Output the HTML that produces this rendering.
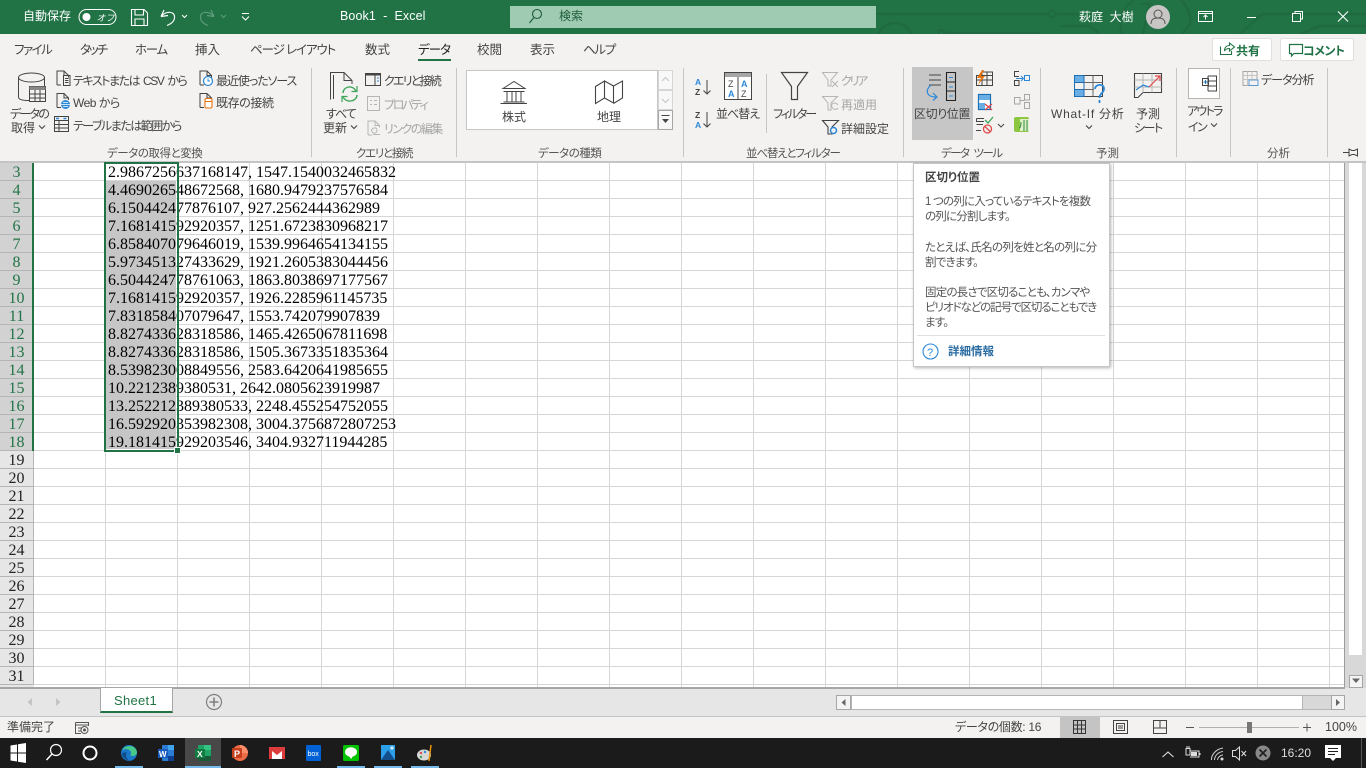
<!DOCTYPE html>
<html lang="ja"><head><meta charset="utf-8"><title>Book1 - Excel</title>
<style>
html,body{margin:0;padding:0;width:1366px;height:768px;overflow:hidden;background:#fff}
div{position:absolute;box-sizing:border-box}
.t{position:absolute;white-space:nowrap;font:12px/16px "Liberation Sans","Noto Sans CJK JP",sans-serif;font-feature-settings:"palt";color:#444}
.tab{font-size:12.5px;top:41px;color:#444}
.g{font-size:11.5px;top:145px;color:#555}
.d{color:#a6a6a6}
.w{color:#fff}
.tip{font-size:11.5px;color:#555;left:925px;letter-spacing:-.8px}
#rows{left:108px;top:164px;font:16px/18px "Liberation Serif",serif;color:#000;white-space:nowrap}
#rows p{margin:0;height:18px;position:relative;left:0}
#nums{left:0;top:163px;width:33px;font:16px/18px "Liberation Serif",serif;text-align:center;color:#217346}
#nums p{margin:0;height:18px;box-sizing:border-box;background:#d2d2d2;border-bottom:1px solid #b5b5b5;line-height:19px}
#nums p.u{background:#e6e6e6;color:#222}
svg{position:absolute;left:0;top:0}
</style></head><body>
<div style="left:0;top:0;width:1366px;height:34px;background:#217346;overflow:hidden">
<svg width="1366" height="34" viewBox="0 0 1366 34" fill="none">
<g stroke="#1f6a40" stroke-width="2.500">
<path d="M876 14H1048M1057 14H1080"/><circle cx="1052" cy="14" r="3.500" stroke-width="2"/>
<circle cx="895" cy="41" r="18"/><circle cx="941" cy="33" r="3" stroke-width="2"/>
<path d="M945 33H1040"/><path d="M1100 34L1090 26H1060"/>
<path d="M1122 34C1118 20 1122 8 1134 0M1140 4H1150L1143 34"/><path d="M1176 -4A30 30 0 0 1 1190 24L1182 34"/>
<path d="M1240 34L1262 14H1366"/><path d="M1300 34L1320 26H1366"/>
</g></svg>
</div>
<div style="left:0;top:34px;width:1366px;height:128px;background:#f3f2f1"></div>
<div style="left:510px;top:6px;width:366px;height:22px;background:#a0cbb3"></div>
<div style="left:912px;top:67px;width:61px;height:73px;background:#c6c6c6"></div>
<div style="left:466px;top:70px;width:192px;height:60px;background:#fff;border:1px solid #c8c6c4"></div>
<div style="left:658px;top:70px;width:15px;height:20px;background:#f8f8f8;border:1px solid #d8d6d4"></div>
<div style="left:658px;top:90px;width:15px;height:20px;background:#f8f8f8;border:1px solid #d8d6d4"></div>
<div style="left:658px;top:110px;width:15px;height:20px;background:#f8f8f8;border:1px solid #a6a6a6"></div>
<div style="left:1212px;top:38px;width:60px;height:23px;background:#fff;border:1px solid #e1dfdd;border-radius:2px"></div>
<div style="left:1280px;top:38px;width:74px;height:23px;background:#fff;border:1px solid #e1dfdd;border-radius:2px"></div>
<div style="left:1188px;top:68px;width:32px;height:31px;background:#fff;border:1px solid #b5b5b5"></div>
<div style="left:0;top:161px;width:1366px;height:2px;background:#c4c4c4"></div>

<!-- grid -->
<div style="left:34px;top:163px;width:1311px;height:525px;background:#fff repeating-linear-gradient(90deg,transparent 0 71px,#d6d6d6 71px 72px)"></div>
<div style="left:34px;top:163px;width:1311px;height:522px;background:repeating-linear-gradient(180deg,transparent 0 17px,#d6d6d6 17px 18px)"></div>
<div style="left:1344px;top:163px;width:1px;height:525px;background:#9c9c9c"></div>
<div style="left:1345px;top:163px;width:21px;height:525px;background:#f0f0f0"></div>
<div style="left:1345px;top:163px;width:4px;height:525px;background:#d8d8d8"></div>
<div style="left:1362px;top:163px;width:4px;height:525px;background:#d8d8d8"></div>
<div style="left:1349px;top:163px;width:13px;height:492px;background:#fff"></div>
<div style="left:1349px;top:655px;width:13px;height:20px;background:#d8d8d8"></div>
<div style="left:1349px;top:675px;width:14px;height:13px;background:#f4f4f4;border:1px solid #a6a6a6"></div>

<div id="nums"><p>3</p><p>4</p><p>5</p><p>6</p><p>7</p><p>8</p><p>9</p><p>10</p><p>11</p><p>12</p><p>13</p><p>14</p><p>15</p><p>16</p><p>17</p><p>18</p><p class="u">19</p><p class="u">20</p><p class="u">21</p><p class="u">22</p><p class="u">23</p><p class="u">24</p><p class="u">25</p><p class="u">26</p><p class="u">27</p><p class="u">28</p><p class="u">29</p><p class="u">30</p><p class="u">31</p></div>
<div style="left:33px;top:163px;width:1px;height:525px;background:#b5b5b5"></div>
<div style="left:32px;top:163px;width:2px;height:288px;background:#217346"></div>
<div style="left:0;top:685px;width:34px;height:3px;background:#e6e6e6"></div>

<!-- selection -->
<div style="left:106px;top:181px;width:70px;height:268px;background:#c6c6c6"></div>
<div id="rows">
<p>2.9867256637168147, 1547.1540032465832</p>
<p>4.469026548672568, 1680.9479237576584</p>
<p>6.150442477876107, 927.2562444362989</p>
<p>7.168141592920357, 1251.6723830968217</p>
<p>6.858407079646019, 1539.9964654134155</p>
<p>5.973451327433629, 1921.2605383044456</p>
<p>6.504424778761063, 1863.8038697177567</p>
<p>7.168141592920357, 1926.2285961145735</p>
<p>7.831858407079647, 1553.742079907839</p>
<p>8.827433628318586, 1465.4265067811698</p>
<p>8.827433628318586, 1505.3673351835364</p>
<p>8.539823008849556, 2583.6420641985655</p>
<p>10.2212389380531, 2642.0805623919987</p>
<p>13.252212389380533, 2248.455254752055</p>
<p>16.592920353982308, 3004.3756872807253</p>
<p>19.181415929203546, 3404.932711944285</p>
</div>
<div style="left:104px;top:162px;width:74.5px;height:289.5px;border:2px solid #217346"></div>
<div style="left:175px;top:448px;width:5px;height:5px;background:#217346;outline:1px solid #fff"></div>

<!-- sheet tabs / status / taskbar -->
<div style="left:0;top:687px;width:1345px;height:1px;background:#a6a6a6"></div>
<div style="left:0;top:688px;width:1366px;height:29px;background:#e6e6e6;border-bottom:1px solid #c4c4c4;border-top:1px solid #a6a6a6"></div>
<div style="left:1345px;top:688px;width:21px;height:28px;background:#e6e6e6"></div>
<div style="left:100px;top:688px;width:73px;height:25px;background:#fff;border-left:1px solid #a6a6a6;border-right:1px solid #a6a6a6;border-bottom:2px solid #217346"></div>
<div style="left:836px;top:695px;width:509px;height:15px;background:#d8d8d8;border:1px solid #b5b5b5"></div>
<div style="left:851px;top:695px;width:452px;height:15px;background:#fff;border:1px solid #b5b5b5"></div>
<div style="left:836px;top:695px;width:15px;height:15px;background:#f4f4f4;border:1px solid #a6a6a6"></div>
<div style="left:1331px;top:695px;width:14px;height:15px;background:#f4f4f4;border:1px solid #a6a6a6"></div>
<div style="left:0;top:717px;width:1366px;height:21px;background:#f3f2f1"></div>
<div style="left:1060px;top:717px;width:40px;height:21px;background:#c4c4c4"></div>
<div style="left:0;top:738px;width:1366px;height:30px;background:#1b1b1b"></div>
<div style="left:185px;top:738px;width:36px;height:30px;background:#484848"></div>
<div style="left:115px;top:766px;width:28px;height:2px;background:#76b9ed"></div>
<div style="left:185px;top:766px;width:36px;height:2px;background:#76b9ed"></div>
<div style="left:337px;top:766px;width:28px;height:2px;background:#76b9ed"></div>
<div style="left:374px;top:766px;width:28px;height:2px;background:#76b9ed"></div>
<div style="left:411px;top:766px;width:28px;height:2px;background:#76b9ed"></div>
<div style="left:1361px;top:738px;width:1px;height:30px;background:#555"></div>

<!-- title text -->
<span class="t w" style="left:23px;top:8px">自動保存</span>
<span class="t w" style="left:340px;top:8px;font-size:12.5px;letter-spacing:.1px">Book1&nbsp; -&nbsp; Excel</span>
<span class="t" style="left:559px;top:8px;color:#1d5c39">検索</span>
<span class="t w" style="left:1079px;top:9px">萩庭&nbsp; 大樹</span>

<div style="left:418px;top:59px;width:33px;height:2px;background:#217346"></div>

<div style="left:0;top:1px;width:0;height:0">
<!-- tabs -->
<span class="t tab" style="left:14px;letter-spacing:-1.5px">ファイル</span>
<span class="t tab" style="left:80px;letter-spacing:-2px">タッチ</span>
<span class="t tab" style="left:135px;letter-spacing:-1.3px">ホーム</span>
<span class="t tab" style="left:195px">挿入</span>
<span class="t tab" style="left:250px;letter-spacing:-1.1px">ページ レイアウト</span>
<span class="t tab" style="left:365px">数式</span>
<span class="t tab" style="left:418px;color:#222;letter-spacing:-1px">データ</span>
<span class="t tab" style="left:477px">校閲</span>
<span class="t tab" style="left:530px">表示</span>
<span class="t tab" style="left:583px;letter-spacing:-1.3px">ヘルプ</span>
<span class="t" style="left:1236px;top:42px;font-weight:700;color:#217346">共有</span>
<span class="t" style="left:1303px;top:42px;font-weight:700;color:#217346;letter-spacing:-.5px">コメント</span>

<!-- ribbon text -->
<span class="t" style="left:10px;top:105px;letter-spacing:-1.75px">データの</span>
<span class="t" style="left:11px;top:119px">取得</span>
<span class="t" style="left:73px;top:72px;letter-spacing:-1.45px;word-spacing:2px">テキストまたは CSV から</span>
<span class="t" style="left:73px;top:94px;letter-spacing:-.5px">Web から</span>
<span class="t" style="left:73px;top:117px;letter-spacing:-1.5px">テーブルまたは範囲から</span>
<span class="t" style="left:216px;top:72px;letter-spacing:-1.1px">最近使ったソース</span>
<span class="t" style="left:216px;top:94px;letter-spacing:-.4px">既存の接続</span>
<span class="t" style="left:326px;top:105px;letter-spacing:-1px">すべて</span>
<span class="t" style="left:323px;top:119px">更新</span>
<span class="t" style="left:384px;top:72px;letter-spacing:-1.8px">クエリと接続</span>
<span class="t d" style="left:384px;top:96px;letter-spacing:-2.2px">プロパティ</span>
<span class="t d" style="left:384px;top:120px;letter-spacing:-1.5px">リンクの編集</span>
<span class="t" style="left:502px;top:108px">株式</span>
<span class="t" style="left:597px;top:108px">地理</span>
<span class="t" style="left:716px;top:105px;letter-spacing:-1px">並べ替え</span>
<span class="t" style="left:773px;top:105px;letter-spacing:-2.1px">フィルター</span>
<span class="t d" style="left:841px;top:72px;letter-spacing:-2.3px">クリア</span>
<span class="t d" style="left:841px;top:96px">再適用</span>
<span class="t" style="left:841px;top:120px">詳細設定</span>
<span class="t" style="left:914px;top:105px;letter-spacing:-.4px">区切り位置</span>
<span class="t" style="left:1051px;top:105px;letter-spacing:.75px">What-If 分析</span>
<span class="t" style="left:1136px;top:105px">予測</span>
<span class="t" style="left:1134px;top:119px;letter-spacing:-1.5px">シート</span>
<span class="t" style="left:1187px;top:102px;letter-spacing:-1.75px">アウトラ</span>
<span class="t" style="left:1188px;top:118px;letter-spacing:-1.5px">イン</span>
<span class="t" style="left:1261px;top:71px;letter-spacing:-1px">データ分析</span>

<span class="t g" style="left:107px;letter-spacing:-.45px">データの取得と変換</span>
<span class="t g" style="left:356px;letter-spacing:-1.3px">クエリと接続</span>
<span class="t g" style="left:538px;letter-spacing:-.5px">データの種類</span>
<span class="t g" style="left:746px;letter-spacing:-1.2px">並べ替えとフィルター</span>
<span class="t g" style="left:941px;letter-spacing:-1.5px;word-spacing:3px">データ ツール</span>
<span class="t g" style="left:1096px">予測</span>
<span class="t g" style="left:1267px">分析</span>
</div>

<!-- bottom text -->
<span class="t" style="left:114px;top:693px;font-size:13px;color:#217346;letter-spacing:.3px">Sheet1</span>
<span class="t" style="left:7px;top:719px">準備完了</span>
<span class="t" style="left:955px;top:719px;letter-spacing:-.3px">データの個数: 16</span>
<span class="t" style="left:1325px;top:719px;font-size:12.5px">100%</span>
<span class="t" style="left:1281px;top:745px;color:#ddd">16:20</span>

<!-- icons -->
<svg width="1366" height="768" viewBox="0 0 1366 768" fill="none">
<defs>
<path id="doc" d="M.5 14.5V.5h7l4.500 4.500v2M7.500.5v4.500H12M.5 14.5h4"/>
<path id="chev" d="M-3 -1.500L0 1.500L3 -1.500" stroke="#444" stroke-width="1.100"/>
</defs>
<!-- title icons -->
<rect x="79" y="9.500" width="37" height="15" rx="7.500" stroke="#fff"/>
<circle cx="86.500" cy="17" r="4" fill="#fff"/>
<text x="96.500" y="21" font-size="9" font-style="italic" fill="#fff" font-family="Noto Sans CJK JP">オフ</text>
<path d="M131.500 9.500H144L147.500 13V25.500H131.500ZM135 9.500V15H143.500V9.500M135 25.500V19H144V25.500" stroke="#fff" stroke-width="1.100"/>
<path d="M161 16.500L164 10M161 16.500L168 15.500M161.500 16C166 11 174 11 174.500 16.500C175 21 171 24 167 25.500" stroke="#fff" stroke-width="1.200"/>
<path d="M182 15L184.500 17.500L187 15" stroke="#fff"/>
<path d="M214 16.500L211 10M214 16.500L207 15.500M213.500 16C209 11 201 11 200.500 16.500C200 21 204 24 208 25.500" stroke="#5f9c7c" stroke-width="1.200"/>
<path d="M221 15L223.500 17.500L226 15" stroke="#5f9c7c"/>
<path d="M242 13.500H249M242 16.500L245.500 20L249 16.500" stroke="#fff"/>
<circle cx="537" cy="14" r="4.500" stroke="#1d5c39" stroke-width="1.100"/><path d="M533.500 18L529.500 23" stroke="#1d5c39" stroke-width="1.200"/>
<circle cx="1158" cy="17" r="12" fill="#c8c6c4"/>
<circle cx="1158" cy="14" r="4" stroke="#555"/><path d="M1151 24C1151 19 1154 18 1158 18C1162 18 1165 19 1165 24" stroke="#555"/>
<path d="M1198.500 11.500H1212.500V21.500H1198.500ZM1198.500 13.500H1212.500" stroke="#fff"/><path d="M1205.500 19.500V15.500M1203.500 17L1205.500 15L1207.500 17" stroke="#fff"/>
<path d="M1247 17.500H1256" stroke="#fff"/>
<path d="M1292.500 13.500H1300.500V21.500H1292.500ZM1295 13V11.500H1302.500V19H1301" stroke="#fff"/>
<path d="M1338 11.500L1348 21.500M1348 11.500L1338 21.500" stroke="#fff" stroke-width="1.100"/>
<path d="M1220.500 46.500V54.500H1231.500V51M1224.500 51C1224.500 47 1227 45.500 1229.500 45.500V43L1234.500 47L1229.500 51V48.500C1227.500 48.500 1225.500 49 1224.500 51Z" stroke="#217346" stroke-width="1.100"/>
<path d="M1289.500 44.500H1302.500V53.500H1294L1291.500 56V53.500H1289.500Z" stroke="#217346" stroke-width="1.200"/>

<!-- get data -->
<path d="M18.500 77V97C18.500 99.500 23 100.500 29 100.500M44.500 77V87" stroke="#444"/>
<ellipse cx="31.500" cy="77.500" rx="13" ry="4.500" stroke="#444"/>
<path d="M29.500 86.500H45.500V101.500H29.500Z" fill="#f3f2f1" stroke="#444"/>
<path d="M29.500 86.500H45.500V90H29.500Z" fill="#888"/>
<path d="M29.500 94H45.500M29.500 98H45.500M35 90V101.500M40 90V101.500" stroke="#444"/>
<use href="#chev" x="42" y="127"/>
<!-- connection doc icons -->
<g stroke="#444"><use href="#doc" x="56.500" y="70.500"/><path d="M63.500 75.500H70V85.500H63.500ZM65 78.500H68.500M65 80.500H68.500M65 82.500H68.500"/></g>
<g stroke="#444"><use href="#doc" x="56.500" y="93"/></g>
<circle cx="65.500" cy="104.500" r="4.500" fill="#2b88d8"/><path d="M61 104.500H70M63 102.500H68M63 106.500H68" stroke="#fff" stroke-width=".8"/>
<path d="M54.500 116.500H68.500V131.500H54.500Z" stroke="#444"/>
<path d="M54.500 120.500H68.500M54.500 124.500H68.500M54.500 128H68.500M59 120.500V131.500" stroke="#444"/>
<path d="M56 118.500H59M63.500 118.500H66.500" stroke="#2b88d8" stroke-width="1.500"/>
<g stroke="#444"><use href="#doc" x="199.500" y="70.500"/></g>
<circle cx="208" cy="81" r="4.500" fill="#fff" stroke="#2b88d8" stroke-width="1.200"/><path d="M208 78.500V81H210" stroke="#2b88d8"/>
<g stroke="#444"><use href="#doc" x="199.500" y="93"/></g>
<rect x="205" y="98.500" width="7" height="9.500" rx="1.500" fill="#fff" stroke="#e8730c" stroke-width="1.100"/><path d="M205 101.500H212" stroke="#e8730c"/>
<!-- refresh -->
<path d="M330.500 99.500V72.500H344L352 80.500V84" stroke="#444"/><path d="M344 72.500V80.500H352" stroke="#444"/>
<path d="M333.500 75V99" stroke="#444"/>
<path d="M343 93C343 87 352 84 356 91M357 95C357 101 347 104 343 97" stroke="#3fa558" stroke-width="1.400"/>
<path d="M357 86V91.500H351.500M342 102V96.500H347.500" stroke="#3fa558" stroke-width="1.200"/>
<use href="#chev" x="354" y="127"/>
<path d="M365.500 73.500H380.500V85.500H365.500ZM375 73.500V85.500" stroke="#444"/><path d="M365.500 73.500H380.500V75.500H365.500Z" fill="#444"/><path d="M377 78H379M377 81H379" stroke="#2b88d8"/>
<path d="M367.500 96.500H379.500V110.500H367.500Z" stroke="#b5b5b5"/><path d="M370 100.500H372M374 100.500H377M370 104.500H372M374 104.500H377" stroke="#b5b5b5"/>
<g stroke="#b5b5b5"><use href="#doc" x="367.500" y="120.500"/><path d="M371 131C373 127 377 127 377 130C377 134 372 134 372 131M373 134.500H380"/></g>
<!-- gallery icons -->
<g stroke="#444"><path d="M503 88.500L514 81.500L525 88.500Z"/><path d="M503.500 91.500H524.500M503.500 102H524.500M500.500 103.500H527M507 92V101.500M512 92V101.500M516 92V101.500M521 92V101.500"/></g>
<path d="M595.500 86.500L604.500 81V98L595.500 103.500ZM604.500 81L613.500 86V103L604.500 98M613.500 86L622.500 81V98L613.500 103.500" stroke="#444" stroke-width="1.100"/>
<path d="M662 81L665.500 77.500L669 81" stroke="#c4c4c4"/><path d="M662 99L665.500 102.500L669 99" stroke="#c4c4c4"/>
<path d="M661.500 115.500H669.500" stroke="#444"/><path d="M662 119H669L665.500 123Z" fill="#444"/>
<!-- sort -->
<text x="695" y="85" font-size="8.500" font-weight="700" fill="#2b88d8" font-family="Liberation Sans">A</text>
<text x="695" y="95" font-size="8.500" font-weight="700" fill="#444" font-family="Liberation Sans">Z</text>
<path d="M707 80V94M703.500 90.500L707 94L710.500 90.500" stroke="#444"/>
<text x="695" y="118" font-size="8.500" font-weight="700" fill="#444" font-family="Liberation Sans">Z</text>
<text x="695" y="128" font-size="8.500" font-weight="700" fill="#2b88d8" font-family="Liberation Sans">A</text>
<path d="M707 112V127M703.500 123.500L707 127L710.500 123.500" stroke="#444"/>
<rect x="724.500" y="72.500" width="27" height="27" fill="#fff" stroke="#444"/><rect x="725" y="73" width="26" height="4" fill="#a6a6a6"/><path d="M738 77V99.500" stroke="#444"/>
<g font-size="9" font-family="Liberation Sans"><text x="728" y="87" fill="#444">Z</text><text x="741" y="87" fill="#2b88d8" font-weight="700">A</text><text x="728" y="97" fill="#2b88d8" font-weight="700">A</text><text x="741" y="97" fill="#444">Z</text></g>
<path d="M781.500 72.500H807.500L797.500 86.500V99.500H791.500V86.500Z" stroke="#444" stroke-width="1.200"/>
<path d="M822.500 72.500H837.500L831 80V86H828V80Z" stroke="#b5b5b5"/><path d="M832 81L838 87M838 81L832 87" stroke="#b5b5b5"/>
<path d="M822.500 96.500H837.500L831 103V110H828V103Z" stroke="#b5b5b5"/><path d="M838 105C835 101 830 104 832 107C833 110 837 110 838 108" stroke="#b5b5b5"/>
<path d="M822.500 120.500H838.500L832 127V134H828V127Z" stroke="#444" stroke-width="1.100"/><circle cx="833.500" cy="130.500" r="3" fill="#f3f2f1" stroke="#2b88d8" stroke-width="1.500"/>
<!-- data tools -->
<path d="M929 75H941M929 80H941M929 85H941" stroke="#444"/>
<path d="M946.500 72.500H955.500V100.500H946.500ZM946.500 82H955.500M946.500 91H955.500" stroke="#222" stroke-width="1.100"/>
<path d="M949 77.500H953M949 87H953M949 96H953" stroke="#2b88d8"/>
<path d="M931 85C925 90 926 97 936 97M933 93L937 97L933 100.500" stroke="#2b88d8" stroke-width="1.200"/>
<path d="M976.500 75.500H992.500V85.500H976.500ZM976.500 80H992.500M982 72V85.500M987 72V85.500M982 72H992.500V75.500" stroke="#444"/>
<path d="M982 70L977 78H981L978 85L985 76H981L984 70Z" fill="#e8730c"/>
<path d="M978.500 94.500H990.500V109.500H978.500Z" fill="#fff" stroke="#1b6fb5" stroke-width="1.200"/><rect x="979" y="95" width="11" height="5" fill="#6aaee3"/><rect x="979" y="103" width="6" height="6" fill="#6aaee3"/>
<path d="M985 104L992 110M992 104L985 110" stroke="#e04a4a" stroke-width="1.300"/>
<path d="M976.500 118.500H984M976.500 124.500H983M976.500 118.500V121.500H984M976 130.500H981" stroke="#444"/>
<path d="M985 120L988 123L993 117" stroke="#3fa558" stroke-width="1.300"/>
<circle cx="987.500" cy="129" r="4" stroke="#e04a4a" stroke-width="1.300"/><path d="M985 126.500L990 131.500" stroke="#e04a4a" stroke-width="1.300"/>
<path d="M998 124L1001 127L1004 124" stroke="#444"/>
<path d="M1019 71.500H1014.500V76.500H1019M1014.500 80.500H1019V85.500H1014.500Z" stroke="#444"/><path d="M1016 78.500H1023M1021 76L1023.500 78.500L1021 81" stroke="#2b88d8"/><rect x="1024.500" y="75.500" width="5" height="5" stroke="#2b88d8"/>
<path d="M1014.500 97.500H1020V104H1014.500ZM1024.500 94.500H1029.500V100H1024.500ZM1024.500 102.500H1029.500V108.500H1024.500ZM1020 100.500H1024.500" stroke="#a6a6a6"/>
<rect x="1014" y="117" width="15" height="15" rx="2" fill="#8dc63f"/><path d="M1020 119H1029V131H1020Z" fill="#dff0c7"/><path d="M1019 128C1021 128 1021 122 1021 122M1024 120V131M1027 120V131" stroke="#2f8a3e"/>
<!-- forecast -->
<rect x="1074.500" y="75.500" width="28" height="21" stroke="#444"/><path d="M1074.500 75.500H1084V82.500H1074.500ZM1074.500 89.500H1084V96.500H1074.500Z" fill="#6aaee3" stroke="#1b6fb5"/><path d="M1074.500 82.500V89.500M1084 82.500V89.500" stroke="#1b6fb5"/>
<path d="M1084 82.500H1102.500M1084 89.500H1094M1093 75.500V96.500" stroke="#666"/>
<path d="M1095 89C1095 84 1104 83 1104 89C1104 93 1099.500 93 1099.500 98M1099.500 100V103" stroke="#2b88d8" stroke-width="1.800"/>
<use href="#chev" x="1089" y="127"/>
<path d="M1134.500 73.500H1161.500V92.500H1143L1138 97.500H1134.500Z" stroke="#444" stroke-width="1.100"/>
<path d="M1134.500 80H1161.500M1134.500 87H1161.500M1143 73.500V92.500M1152 73.500V92.500" stroke="#b5b5b5"/>
<path d="M1136 90L1143 85L1149 87" stroke="#2b88d8" stroke-width="1.200"/><path d="M1149 87L1160 76M1155 76H1160V81" stroke="#e04a4a" stroke-width="1.200"/>
<path d="M1202.500 78.500H1208.500V85.500H1202.500ZM1208 76H1216.500V91H1208M1208 81H1216.500M1208 86H1216.500M1208 76V91" stroke="#444"/><path d="M1203.500 82H1207.500M1205.500 80V84" stroke="#1b6fb5"/>
<use href="#chev" x="1214" y="125"/>
<rect x="1243" y="71.500" width="14" height="14" stroke="#a6a6a6"/><path d="M1243 75.500H1257M1243 79.500H1257M1247.500 71.500V85.500M1252 71.500V85.500" stroke="#c4c4c4"/><path d="M1249 80H1258V85.500H1249Z" fill="#f3f2f1" stroke="#5b9bd5"/>
<path d="M1343 152.500H1349M1349 149V156L1352 154.500H1354.500L1357.500 156V149L1354.500 150.500H1352Z" stroke="#444"/>
<!-- group separators -->
<g stroke="#c8c6c4"><path d="M311.500 68V157M456.500 68V157M683.500 68V157M766.500 74V133M903.500 68V157M1040.500 68V157M1176.500 68V157M1230.500 68V157M1327.500 68V157"/></g>

<path d="M1352 678.500H1360L1356 683Z" fill="#666"/>
<path d="M845.500 699V706L841.500 702.500Z" fill="#666"/>
<path d="M1336 699V706L1340 702.500Z" fill="#666"/>
<path d="M32 698V706L27.500 702Z" fill="#c4c4c4"/><path d="M56 698V706L60.500 702Z" fill="#c4c4c4"/>
<circle cx="214" cy="702" r="7.500" stroke="#808080" stroke-width="1.200"/><path d="M209.500 702H218.500M214 697.500V706.500" stroke="#808080" stroke-width="1.600"/>
<!-- status icons -->
<path d="M75.500 722.500H88.500V726M75.500 722.500V733.500H81M75.500 725H88.500M78 728H82M78 731H81" stroke="#555"/><circle cx="84.500" cy="730" r="3.500" stroke="#555"/><circle cx="84.500" cy="730" r="1.500" fill="#555"/>
<path d="M1073.500 720.500H1085.500V733.500H1073.500ZM1077.500 720.500V733.500M1081.500 720.500V733.500M1073.500 725H1085.500M1073.500 729H1085.500" stroke="#333"/>
<path d="M1113.500 720.500H1127.500V733.500H1113.500Z" stroke="#444"/><path d="M1116.500 723.500H1124.500V730.500H1116.500ZM1118 726H1123M1118 728H1123" stroke="#444"/>
<path d="M1153.500 720.500H1166.500V733.500H1153.500ZM1160 720.500V728H1153.500M1160 728H1166.500" stroke="#444"/>
<path d="M1186 727.500H1194M1303 727.500H1311M1307 723.500V731.500" stroke="#555"/>
<path d="M1199 727.500H1299" stroke="#b0b0b0"/><rect x="1247" y="722" width="5" height="11" fill="#777"/>
<!-- taskbar -->
<path d="M10.500 745.500L17 744.500V752.500H10.500ZM18 744.300L26 743V752.500H18ZM10.500 753.500H17V761.500L10.500 760.500ZM18 753.500H26V763L18 761.700Z" fill="#fff"/>
<circle cx="56" cy="750" r="5.500" stroke="#fff" stroke-width="1.200"/><path d="M52 754L46.500 760" stroke="#fff" stroke-width="1.500"/>
<circle cx="90" cy="753" r="6.500" stroke="#fff" stroke-width="2"/>
<circle cx="129" cy="753" r="8" fill="#1b79c9"/><path d="M122 750C126 744 136 745 137 752C137 756 132 757 130 755C133 753 130 749 126 749C124 749 123 750 122 750Z" fill="#47c98a"/><path d="M122 753C122 758 127 761 131 761C126 760 125 755 127 752Z" fill="#0f4d8a"/>
<rect x="162" y="745" width="12" height="16" rx="1" fill="#2b7cd3"/><rect x="168" y="745" width="6" height="5" fill="#41a5ee"/><rect x="168" y="756" width="6" height="5" fill="#103f91"/><rect x="158" y="749" width="10" height="9" fill="#185abd"/><text x="159" y="757" font-size="8" font-weight="700" fill="#fff" font-family="Liberation Sans">W</text>
<rect x="198" y="745" width="13" height="16" rx="1" fill="#21a366"/><rect x="204" y="745" width="7" height="5" fill="#33c481"/><rect x="198" y="756" width="13" height="5" fill="#185c37"/><rect x="195" y="749" width="10" height="9" fill="#107c41"/><text x="197" y="757" font-size="8.500" font-weight="700" fill="#fff" font-family="Liberation Sans">X</text>
<circle cx="240" cy="753" r="8" fill="#ed6c47"/><path d="M240 745A8 8 0 0 1 248 753H240Z" fill="#ff8f6b"/><rect x="232" y="748" width="10" height="10" rx="1" fill="#c43e1c"/><text x="234" y="757" font-size="9" font-weight="700" fill="#fff" font-family="Liberation Sans">P</text>
<rect x="269" y="747" width="16" height="12" fill="#fff"/><path d="M269 747H285V759H282V751L277 755L272 751V759H269Z" fill="#dd3c3c"/>
<rect x="306" y="745" width="15" height="16" rx="1" fill="#0061d5"/><text x="307.500" y="756" font-size="7" fill="#fff" font-family="Liberation Sans">box</text>
<rect x="343" y="745" width="16" height="16" rx="1.500" fill="#00c300"/><ellipse cx="351" cy="752" rx="6" ry="4.800" fill="#fff"/><path d="M349 756L351 759L353 756Z" fill="#fff"/>
<rect x="381" y="745" width="14" height="15" fill="#2b9fe8"/><path d="M381 760L388 750L395 760Z" fill="#134d8c"/><path d="M390 748H394M392 746V750" stroke="#fff"/>
<ellipse cx="424" cy="755" rx="7" ry="5.500" fill="#d8d8d8"/><circle cx="421" cy="753" r="1.200" fill="#e04a4a"/><circle cx="425" cy="752" r="1.200" fill="#2b88d8"/><circle cx="421" cy="757" r="1.200" fill="#3fa558"/><path d="M431 745L429 761" stroke="#e8930c" stroke-width="1.500"/>
<path d="M1162.500 757L1168 752L1173.500 757" stroke="#ddd" stroke-width="1.100"/>
<path d="M1186 748.500H1190V755H1186ZM1187 746V748M1189 746V748M1190 751H1199V757H1190" stroke="#ddd"/><rect x="1191" y="752" width="6" height="4" fill="#ddd"/><path d="M1200 753V755" stroke="#ddd"/>
<path d="M1211.500 760C1211 755 1216 749 1223 748M1214.500 760C1214.500 756 1218 752 1223 751.500M1217.500 760C1217.500 758 1220 755 1223 755" stroke="#ccc"/><circle cx="1222" cy="759" r="1.500" fill="#ddd"/>
<path d="M1232.500 750.500H1235.500L1239.500 747V760L1235.500 756.500H1232.500Z" stroke="#ddd"/><path d="M1241.500 751L1246 756M1246 751L1241.500 756" stroke="#ddd"/>
<circle cx="1263" cy="753" r="7.500" fill="#888"/><path d="M1259.500 749.500L1266.500 756.500M1266.500 749.500L1259.500 756.500" stroke="#222" stroke-width="1.800"/>
<path d="M1325 745H1341V758H1336L1333 761L1330 758H1325Z" fill="#fff"/><path d="M1328 748.500H1338M1328 751.500H1338M1328 754.500H1335" stroke="#222"/>
</svg>

<!-- tooltip -->
<div style="left:913px;top:163px;width:197px;height:204px;background:#fff;border:1px solid #c8c6c4;box-shadow:1px 1px 3px rgba(0,0,0,.3)"></div>
<span class="t" style="left:925px;top:170px;font-weight:700;color:#444;font-size:11.500px">区切り位置</span>
<span class="t tip" style="top:194px">1 つの列に入っているテキストを複数</span>
<span class="t tip" style="top:209px">の列に分割します。</span>
<span class="t tip" style="top:240px;letter-spacing:-.7px">たとえば、氏名の列を姓と名の列に分</span>
<span class="t tip" style="top:255px">割できます。</span>
<span class="t tip" style="top:285px">固定の長さで区切ることも、カンマや</span>
<span class="t tip" style="top:300px;letter-spacing:-1.1px">ピリオドなどの記号で区切ることもでき</span>
<span class="t tip" style="top:315px">ます。</span>
<div style="left:917px;top:335px;width:188px;height:1px;background:#e1dfdd"></div>
<span class="t" style="left:948px;top:344px;font-weight:700;color:#2b6ca3;font-size:11.500px">詳細情報</span>
<svg width="1366" height="768" viewBox="0 0 1366 768" fill="none"><circle cx="930.500" cy="351.500" r="7.500" stroke="#2b88d8" stroke-width="1.100"/><text x="927" y="356" font-size="11" fill="#2b88d8" font-family="Liberation Sans">?</text></svg>
</body></html>
